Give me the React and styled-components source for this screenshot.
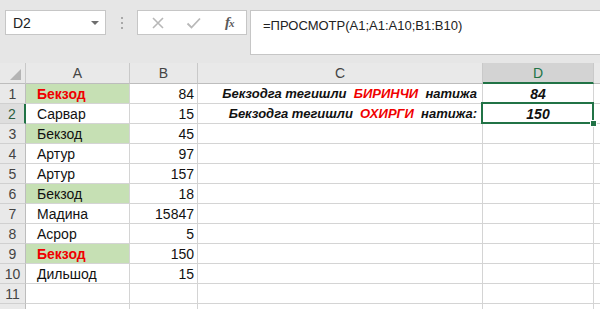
import React from 'react'
import styled, { createGlobalStyle } from 'styled-components'

const GREEN = '#217346'

const GlobalStyle = createGlobalStyle`
  html, body { margin: 0; padding: 0; background: #e6e6e6; }
  body { font-family: "Liberation Sans", Arial, sans-serif; overflow: hidden; }
`

const Window = styled.div`
  width: 600px;
  height: 309px;
  background: #e6e6e6;
  display: flex;
  flex-direction: column;
  overflow: hidden;
`

const FormulaRow = styled.div`
  display: flex;
  align-items: flex-start;
  padding: 10px 0 0 5px;
  height: 45px;
  flex-shrink: 0;
`

const NameBox = styled.div`
  width: 101px;
  height: 25px;
  box-sizing: border-box;
  background: #fff;
  border: 1px solid #c6c6c6;
  display: flex;
  align-items: center;
  justify-content: space-between;
  padding: 0 6px 0 7px;
  font-size: 14px;
  color: #222;
`

const Caret = styled.span`
  width: 0;
  height: 0;
  border-left: 4px solid transparent;
  border-right: 4px solid transparent;
  border-top: 4px solid #6e6e6e;
`

const Dots = styled.div`
  width: 31px;
  height: 25px;
  display: flex;
  flex-direction: column;
  align-items: center;
  justify-content: center;
  gap: 3px;

  span {
    width: 2px;
    height: 2px;
    background: #a8a8a8;
  }
`

const ButtonBox = styled.div`
  width: 110px;
  height: 25px;
  box-sizing: border-box;
  background: #fff;
  border: 1px solid #c6c6c6;
  display: flex;
  align-items: center;
  padding: 0 0 0 13px;
  gap: 21px;
  color: #b8b8b8;
`

const Fx = styled.span`
  font-family: "Liberation Serif", "Times New Roman", serif;
  font-style: italic;
  font-weight: bold;
  font-size: 15px;
  color: #5a5a5a;
  margin-left: 2px;
  letter-spacing: -1px;

  small {
    font-size: 11px;
  }
`

const FormulaInput = styled.div`
  flex: 1;
  height: 45px;
  margin-left: 3px;
  margin-right: -3px;
  box-sizing: border-box;
  background: #fff;
  border: 1px solid #c6c6c6;
  padding: 6px 0 0 12px;
  font-size: 13px;
  line-height: 18px;
  color: #222;
`

const Sheet = styled.div`
  margin-top: 8px;
  display: grid;
  grid-template-columns: 26px 104px 68px 285px 111px 1fr;
  grid-template-rows: 21px;
  grid-auto-rows: 20px;
  background: #fff;
  flex: 1;
  overflow: hidden;
`

const HeadCell = styled.div`
  position: relative;
  box-sizing: border-box;
  background: ${p => (p.$active ? '#d3d3d3' : '#e9e9e9')};
  color: ${p => (p.$active ? GREEN : '#444')};
  border-right: 1px solid #c9c9c9;
  border-bottom: ${p => (p.$active ? `2px solid ${GREEN}` : '1px solid #bdbdbd')};
  display: flex;
  align-items: center;
  justify-content: center;
  font-size: 14px;
`

const RowHead = styled.div`
  box-sizing: border-box;
  background: ${p => (p.$active ? '#dedede' : '#e9e9e9')};
  color: ${p => (p.$active ? '#2d5d40' : '#444')};
  border-right: ${p => (p.$active ? `2px solid ${GREEN}` : '1px solid #bdbdbd')};
  border-bottom: 1px solid #d0d0d0;
  display: flex;
  align-items: center;
  justify-content: center;
  font-size: 14px;
`

const Cell = styled.div`
  position: relative;
  box-sizing: border-box;
  border-right: 1px solid #d4d4d4;
  border-bottom: 1px solid #d4d4d4;
  background: ${p => (p.$fill ? '#c6e0b4' : '#fff')};
  color: ${p => (p.$red ? '#f00000' : '#111')};
  font-weight: ${p => (p.$bold ? 'bold' : 'normal')};
  font-style: ${p => (p.$italic ? 'italic' : 'normal')};
  font-size: ${p => p.$size || 14}px;
  display: flex;
  align-items: center;
  justify-content: ${p => p.$align || 'flex-start'};
  padding: ${p => (p.$align === 'flex-end' ? `0 ${p.$pr || 3}px 0 0` : p.$align === 'center' ? '0' : '0 0 0 11px')};
  white-space: pre;
  overflow: visible;

  ${p => p.$selected && `
    &::after {
      content: '';
      position: absolute;
      left: -2px;
      top: -2px;
      right: -1px;
      bottom: -1px;
      border: 2px solid ${GREEN};
      pointer-events: none;
      z-index: 2;
    }
    &::before {
      content: '';
      position: absolute;
      right: -4px;
      bottom: -4px;
      width: 5px;
      height: 5px;
      background: ${GREEN};
      border: 1px solid #fff;
      z-index: 3;
    }
  `}
`

const Red = styled.span`
  color: #f00000;
`

const Corner = () => (
  <HeadCell>
    <svg width="26" height="21" style={{ position: 'absolute', left: 0, top: 0 }}>
      <polygon points="10,17 21,17 21,6" fill="#b4b4b4" />
    </svg>
  </HeadCell>
)

const names = [
  ['Бекзод', 84, true, true],
  ['Сарвар', 15],
  ['Бекзод', 45, true],
  ['Артур', 97],
  ['Артур', 157],
  ['Бекзод', 18, true],
  ['Мадина', 15847],
  ['Асрор', 5],
  ['Бекзод', 150, true, true],
  ['Дильшод', 15],
  ['', ''],
  ['', ''],
]

const results = {
  0: {
    label: <>Бекзодга тегишли  <Red>БИРИНЧИ</Red>  натижа</>,
    value: '84',
  },
  1: {
    label: <>Бекзодга тегишли  <Red>ОХИРГИ</Red>  натижа:</>,
    value: '150',
  },
}

export default function App() {
  return (
    <Window>
      <GlobalStyle />
      <FormulaRow>
        <NameBox>
          D2
          <Caret />
        </NameBox>
        <Dots>
          <span />
          <span />
          <span />
        </Dots>
        <ButtonBox>
          <svg width="14" height="14" viewBox="0 0 14 14">
            <path d="M2 2 L12 12 M12 2 L2 12" stroke="currentColor" strokeWidth="1.6" />
          </svg>
          <svg width="16" height="14" viewBox="0 0 16 14">
            <path d="M1.5 7.5 L5.5 11.5 L14 2.5" stroke="currentColor" strokeWidth="1.8" fill="none" />
          </svg>
          <Fx>
            f<small>x</small>
          </Fx>
        </ButtonBox>
        <FormulaInput>=ПРОСМОТР(A1;A1:A10;B1:B10)</FormulaInput>
      </FormulaRow>

      <Sheet>
        <Corner />
        <HeadCell>A</HeadCell>
        <HeadCell>B</HeadCell>
        <HeadCell>C</HeadCell>
        <HeadCell $active>D</HeadCell>
        <HeadCell />

        {names.map(([name, num, fill, red], i) => {
          const res = results[i]
          return (
            <React.Fragment key={i}>
              <RowHead $active={i === 1}>{i < 11 ? i + 1 : ''}</RowHead>
              <Cell $fill={fill} $red={red} $bold={red}>
                {name}
              </Cell>
              <Cell $align="flex-end">{num}</Cell>
              <Cell $align="flex-end" $pr={5} $size={13} $bold $italic>
                {res ? res.label : ''}
              </Cell>
              <Cell $align="center" $bold $italic $selected={i === 1}>
                {res ? res.value : ''}
              </Cell>
              <Cell />
            </React.Fragment>
          )
        })}
      </Sheet>
    </Window>
  )
}
